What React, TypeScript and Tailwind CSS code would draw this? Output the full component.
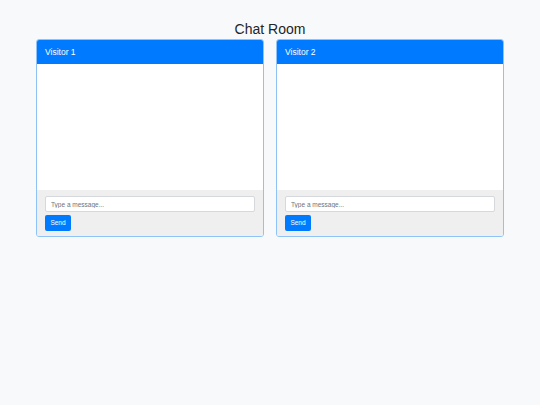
function ChatBox({ name }: { name: string }) {
  return (
    <div className="flex flex-col rounded-[3px] border border-[#8fc3f7] bg-white overflow-hidden">
      <div className="h-6 bg-[#007bff] px-2 flex items-center text-[8.5px] text-white">{name}</div>
      <div className="h-[126px] bg-white" />
      <div className="flex flex-col gap-[3px] bg-[#efefef] px-2 pt-[6px] pb-[5px]">
        <input
          className="h-4 w-full rounded-[2px] border border-[#d6d9dc] bg-white px-[5px] text-[6.5px] text-[#495057] outline-none placeholder:text-[#6c757d]"
          placeholder="Type a message..."
        />
        <button className="h-4 w-[26px] rounded-[2px] bg-[#007bff] text-[6.5px] text-white">Send</button>
      </div>
    </div>
  );
}

export default function App() {
  return (
    <div className="min-h-[405px] bg-[#f8f9fa] font-['Liberation_Sans',Arial,sans-serif] text-[#212529]">
      <h1 className="pt-[21px] text-center text-[14px] leading-[16px]">Chat Room</h1>
      <div className="mx-auto mt-[2px] grid w-[468px] grid-cols-2 gap-3">
        <ChatBox name="Visitor 1" />
        <ChatBox name="Visitor 2" />
      </div>
    </div>
  );
}
